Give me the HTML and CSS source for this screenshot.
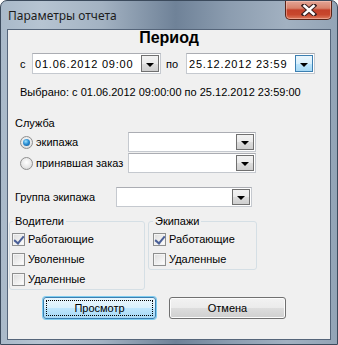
FILE: index.html
```html
<!DOCTYPE html>
<html lang="ru">
  <head>
    <meta charset="UTF-8" />
    <title>Параметры отчета</title>
    <link rel="stylesheet" href="styles.css">
  </head>
  <body>
    <div class="window">
      <div class="titlebar">
        <span class="title">Параметры отчета</span>
        <span class="close">
          <svg width="16" height="12" viewBox="0 0 16 12">
            <path d="M3 1.5 L13 10.5 M13 1.5 L3 10.5" stroke="#3a2020" stroke-width="4.6" stroke-linecap="square" />
            <path d="M3.5 2 L12.5 10 M12.5 2 L3.5 10" stroke="#ffffff" stroke-width="2.6" stroke-linecap="square" />
          </svg>
        </span>
      </div>
      <div class="client">
        <h2 class="period">Период</h2>

        <div class="date-row">
          <span class="date-label">с</span>
          <div class="combo combo-date">
            <span class="combo-value num">01.06.2012 09:00</span>
            <span class="drop"><i class="arrow"></i></span>
          </div>
          <span class="date-label to">по</span>
          <div class="combo combo-date">
            <span class="combo-value num">25.12.2012 23:59</span>
            <span class="drop drop-hover"><i class="arrow"></i></span>
          </div>
        </div>

        <div class="selected">Выбрано: с 01.06.2012 09:00:00 по 25.12.2012 23:59:00</div>

        <div class="section-label">Служба</div>
        <div class="radio-row">
          <label class="radio"><span class="radio-box checked"></span>экипажа</label>
          <div class="combo combo-service"><span class="combo-value"></span><span class="drop"><i class="arrow"></i></span></div>
        </div>
        <div class="radio-row">
          <label class="radio"><span class="radio-box"></span>принявшая заказ</label>
          <div class="combo combo-service"><span class="combo-value"></span><span class="drop"><i class="arrow"></i></span></div>
        </div>

        <div class="crew-row">
          <span class="crew-label">Группа экипажа</span>
          <div class="combo combo-crew"><span class="combo-value"></span><span class="drop"><i class="arrow"></i></span></div>
        </div>

        <div class="groups">
          <fieldset class="group drivers">
            <legend>Водители</legend>
            <label class="check"><span class="check-box checked"></span>Работающие</label>
            <label class="check"><span class="check-box"></span>Уволенные</label>
            <label class="check"><span class="check-box"></span>Удаленные</label>
          </fieldset>
          <fieldset class="group crews">
            <legend>Экипажи</legend>
            <label class="check"><span class="check-box checked"></span>Работающие</label>
            <label class="check"><span class="check-box"></span>Удаленные</label>
          </fieldset>
        </div>

        <div class="buttons">
          <button class="btn btn-default"><span>Просмотр</span></button>
          <button class="btn btn-cancel"><span>Отмена</span></button>
        </div>
      </div>
    </div>
  </body>
</html>
```

FILE: styles.css
```css
* {
  margin: 0;
  padding: 0;
  box-sizing: border-box;
}

body {
  width: 338px;
  height: 345px;
  overflow: hidden;
  font-family: "Liberation Sans", Arial, sans-serif;
  font-size: 11px;
  color: #000;
  background: #fff;
}

.window {
  width: 338px;
  height: 345px;
  border: 1px solid #3b4a5c;
  border-radius: 7px 7px 0 0;
  background: linear-gradient(90deg, #a9b9c9 0%, #b6c4d2 12%, #a3b2c2 30%, #6f8298 52%, #8c9db0 68%, #a2b1c1 85%, #93a4b6 100%);
  padding: 0 6px 5px;
}

.titlebar {
  height: 28px;
  display: flex;
  align-items: flex-start;
  justify-content: space-between;
}

.title {
  font-family: "Noto Sans", sans-serif;
  font-size: 12px;
  line-height: 14px;
  padding: 8px 0 0 1px;
  color: #1c1c1c;
}

.close {
  width: 47px;
  height: 19px;
  margin-right: -1px;
  border: 1px solid #5a2418;
  border-top: none;
  border-radius: 0 0 5px 5px;
  background: linear-gradient(#e3a596 0%, #d8826b 40%, #c4412a 50%, #c8472d 75%, #dc7a5d 100%);
  box-shadow: inset 0 0 0 1px rgba(255, 210, 200, 0.45);
  display: flex;
  align-items: center;
  justify-content: center;
}

.client {
  height: 311px;
  border: 1px solid #55657a;
  background: #f0f0f0;
}

.num {
  letter-spacing: 0.8px;
}

.period {
  font-size: 16px;
  font-weight: bold;
  line-height: 16px;
  text-align: center;
}

.date-row {
  display: flex;
  align-items: center;
  margin-top: 7px;
  height: 21px;
}

.date-label {
  width: 24px;
  padding-left: 12px;
}

.date-label.to {
  width: 25px;
  padding-left: 5px;
}

.combo {
  display: flex;
  align-items: center;
  height: 21px;
  background: #fff;
  border: 1px solid #c5c9cf;
  border-top-color: #abadb3;
  padding: 1px;
}

.combo-value {
  flex: 1;
  padding-left: 1px;
  white-space: nowrap;
}

.drop {
  width: 18px;
  height: 17px;
  border: 1px solid #707070;
  background: linear-gradient(#f2f2f2 0%, #ebebeb 50%, #dddddd 51%, #cfcfcf 100%);
  display: flex;
  align-items: center;
  justify-content: center;
}

.drop-hover {
  border-color: #3c7fb1;
  background: linear-gradient(#eaf6fd 0%, #d9f0fc 50%, #bee6fd 51%, #a7d9f5 100%);
}

.arrow {
  width: 0;
  height: 0;
  border-left: 4px solid transparent;
  border-right: 4px solid transparent;
  border-top: 4px solid #000;
  margin-top: 2px;
}

.combo-date {
  width: 129px;
}

.selected {
  margin-top: 11px;
  padding-left: 12px;
  line-height: 15px;
  white-space: nowrap;
}

.section-label {
  margin-top: 16px;
  padding-left: 7px;
  line-height: 15px;
}

.radio-row {
  display: flex;
  align-items: center;
  margin-top: 1px;
  height: 20px;
}

.radio-row + .radio-row {
  margin-top: 1px;
}

.radio {
  width: 120px;
  padding-left: 12px;
  display: flex;
  align-items: center;
  gap: 3px;
  white-space: nowrap;
}

.radio-box {
  width: 13px;
  height: 13px;
  flex: none;
  border-radius: 50%;
  border: 1px solid #8f8f8f;
  background: radial-gradient(circle at 50% 40%, #ffffff 0%, #e8e8e8 55%, #cfcfcf 100%);
  display: flex;
  align-items: center;
  justify-content: center;
}

.radio-box.checked::after {
  content: "";
  width: 7px;
  height: 7px;
  border-radius: 50%;
  background: radial-gradient(circle at 40% 35%, #9ee3ff 0%, #2c8fd4 45%, #0d4f8c 100%);
}

.combo-service {
  width: 128px;
  height: 20px;
}

.combo-service .drop {
  height: 16px;
}

.crew-row {
  display: flex;
  align-items: center;
  margin-top: 14px;
  height: 20px;
}

.crew-label {
  width: 108px;
  padding-left: 7px;
}

.combo-crew {
  width: 136px;
  height: 20px;
}

.combo-crew .drop {
  height: 16px;
}

.groups {
  display: flex;
  align-items: flex-start;
  gap: 3px;
  margin-top: 7px;
  padding-left: 1px;
}

.group {
  border: 1px solid #d5dfe5;
  border-radius: 3px;
  padding: 1px 2px 0 2px;
}

.group legend {
  line-height: 14px;
  margin-left: 1px;
  padding: 0 2px;
}

.drivers {
  width: 136px;
}

.crews {
  width: 109px;
  padding-left: 4px;
}

.crews legend {
  margin-left: 0;
}

.check {
  display: flex;
  align-items: center;
  gap: 3px;
  height: 20px;
  white-space: nowrap;
}

.check-box {
  width: 13px;
  height: 13px;
  flex: none;
  border: 1px solid #8e8f8f;
  background: linear-gradient(135deg, #dcdcdc 0%, #f4f4f4 70%, #ffffff 100%);
  box-shadow: inset 0 0 0 1px #f4f4f4;
  position: relative;
}

.check-box.checked::after {
  content: "";
  position: absolute;
  left: 3px;
  top: 0px;
  width: 4px;
  height: 8px;
  border-right: 2px solid #4a5f97;
  border-bottom: 2px solid #4a5f97;
  transform: rotate(40deg);
}

.buttons {
  display: flex;
  gap: 13px;
  margin-top: 7px;
  padding-left: 35px;
}

.btn {
  height: 22px;
  font-family: "Liberation Sans", Arial, sans-serif;
  font-size: 11px;
  color: #000;
  border: 1px solid #707070;
  border-radius: 3px;
  padding: 2px;
  display: flex;
}

.btn span {
  flex: 1;
  display: flex;
  align-items: center;
  justify-content: center;
}

.btn-default {
  width: 113px;
  border-color: #3c7fb1;
  background: linear-gradient(#eaf6fd 0%, #d9f0fc 50%, #bee6fd 51%, #a7d9f5 100%);
  box-shadow: 0 0 0 1px #7fcdf0;
}

.btn-default span {
  border: 1px dotted #000;
}

.btn-cancel {
  width: 117px;
  background: linear-gradient(#f2f2f2 0%, #ebebeb 50%, #dddddd 51%, #cfcfcf 100%);
  box-shadow: inset 0 0 0 1px #fcfcfc;
}
```
